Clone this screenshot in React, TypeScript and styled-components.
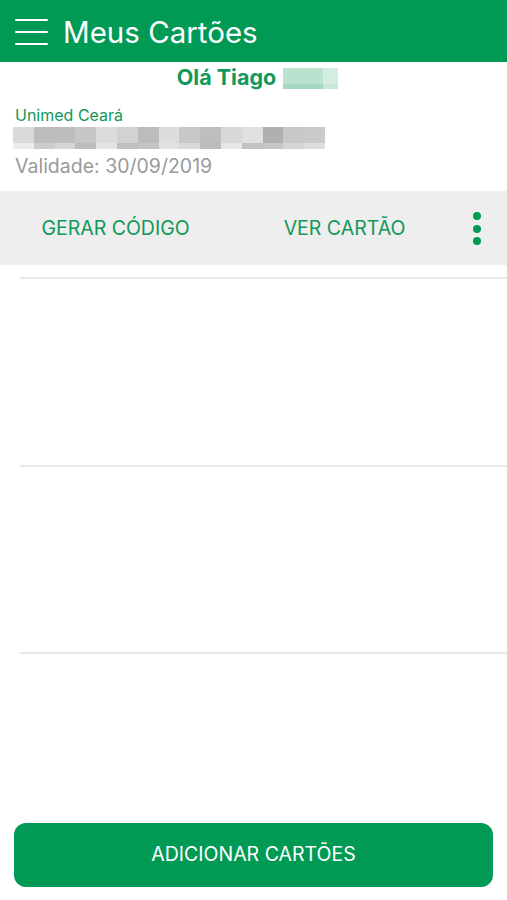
import React from "react";
import styled, { createGlobalStyle } from "styled-components";

const GREEN = "#009a55";
const TEXT_GREEN = "#11985a";

const Global = createGlobalStyle`
  html, body { margin: 0; padding: 0; background: #fff; }
  body { font-family: Inter, "Noto Sans", sans-serif; -webkit-font-smoothing: antialiased; }
  * { box-sizing: border-box; }
`;

const Page = styled.div`
  width: 507px;
  height: 900px;
  display: flex;
  flex-direction: column;
  background: #fff;
  overflow: hidden;
`;

const Header = styled.header`
  height: 62px;
  background: ${GREEN};
  display: flex;
  align-items: center;
  padding-left: 15px;
  gap: 15px;
  flex-shrink: 0;
`;

const MenuButton = styled.div`
  width: 33px;
  display: flex;
  flex-direction: column;
  gap: 10px;
  padding-top: 1px;
`;

const MenuLine = styled.span`
  display: block;
  height: 2px;
  background: #fff;
  border-radius: 1px;
`;

const Title = styled.h1`
  margin: 4px 0 0 0;
  color: #fff;
  font-size: 29.5px;
  font-weight: 400;
  line-height: 1;
`;

const Greeting = styled.div`
  display: flex;
  justify-content: center;
  align-items: center;
  gap: 7px;
  height: 32px;
  padding-left: 8px;
  flex-shrink: 0;
`;

const GreetingText = styled.span`
  color: ${TEXT_GREEN};
  font-size: 21.5px;
  font-weight: 700;
  line-height: 1;
`;

const NameBlur = styled.div`
  width: 55px;
  height: 21px;
  display: grid;
  grid-template-columns: 40px 15px;
  grid-template-rows: 16px 5px;
`;

const BlurCell = styled.span<{ $c: string }>`
  background: ${(p) => p.$c};
`;

const CardInfo = styled.div`
  padding: 12px 13px 0 15px;
  display: flex;
  flex-direction: column;
  height: 97px;
  flex-shrink: 0;
`;

const Company = styled.div`
  color: ${TEXT_GREEN};
  font-size: 16px;
  line-height: 18px;
`;

const Mosaic = styled.div`
  margin-left: -2px;
  margin-top: 3px;
  width: 312px;
  display: grid;
  grid-template-columns: repeat(15, 1fr);
  grid-template-rows: 16px 6px;
`;

const Validity = styled.div`
  color: #9a9a9a;
  font-size: 19.5px;
  margin-top: 6px;
  line-height: 22px;
`;

const ActionBar = styled.div`
  height: 74px;
  background: #eeeeee;
  display: flex;
  align-items: center;
  flex-shrink: 0;
`;

const ActionButton = styled.button<{ $w: number }>`
  width: ${(p) => p.$w}px;
  border: 0;
  background: transparent;
  color: ${TEXT_GREEN};
  font-family: inherit;
  font-size: 19.5px;
  padding: 0;
  text-align: center;
`;

const MoreButton = styled.div`
  width: 38px;
  display: flex;
  flex-direction: column;
  align-items: center;
  gap: 4.5px;
  padding-top: 1px;
`;

const Dot = styled.span`
  width: 8px;
  height: 8px;
  border-radius: 50%;
  background: ${GREEN};
`;

const CardList = styled.div`
  flex: 1;
  min-height: 0;
  overflow: hidden;
  display: flex;
  flex-direction: column;
  padding-top: 12px;
`;

const CardSlot = styled.div`
  height: 187.5px;
  margin-left: 20px;
  border-top: 2px solid #e8e8e8;
  flex-shrink: 0;
`;

const Footer = styled.div`
  padding: 0 14px 13px 14px;
  flex-shrink: 0;
`;

const AddButton = styled.button`
  width: 479px;
  height: 64px;
  border: 0;
  border-radius: 12px;
  background: ${GREEN};
  color: #fff;
  font-family: inherit;
  font-size: 19.5px;
  padding: 0 0 2px 0;
`;

const topRow = [
  "#dadada", "#bdbdbd", "#bdbdbd", "#c6c6c6", "#dcdcdc", "#d2d2d2", "#bcbcbc", "#dddddd",
  "#c8c8c8", "#bebebe", "#d8d8d8", "#e0e0e0", "#b0b0b0", "#c8c8c8", "#cacaca",
];
const bottomRow = [
  "#ececec", "#cccccc", "#d6d6d6", "#bdbdbd", "#e4e4e4", "#bfbfbf", "#c4c4c4", "#e2e2e2",
  "#dadada", "#bcbcbc", "#e6e6e6", "#c2c2c2", "#c6c6c6", "#d4d4d4", "#dedede",
];

export default function App() {
  return (
    <Page>
      <Global />
      <Header>
        <MenuButton>
          <MenuLine />
          <MenuLine />
          <MenuLine />
        </MenuButton>
        <Title>Meus Cartões</Title>
      </Header>
      <Greeting>
        <GreetingText>Olá Tiago</GreetingText>
        <NameBlur>
          <BlurCell $c="#b9e2cf" />
          <BlurCell $c="#d3ede1" />
          <BlurCell $c="#a6d8c0" />
          <BlurCell $c="#c8e8da" />
        </NameBlur>
      </Greeting>
      <CardInfo>
        <Company>Unimed Ceará</Company>
        <Mosaic>
          {topRow.map((c, i) => (
            <BlurCell key={"t" + i} $c={c} />
          ))}
          {bottomRow.map((c, i) => (
            <BlurCell key={"b" + i} $c={c} />
          ))}
        </Mosaic>
        <Validity>Validade: 30/09/2019</Validity>
      </CardInfo>
      <ActionBar>
        <ActionButton $w={231}>GERAR CÓDIGO</ActionButton>
        <ActionButton $w={227}>VER CARTÃO</ActionButton>
        <MoreButton>
          <Dot />
          <Dot />
          <Dot />
        </MoreButton>
      </ActionBar>
      <CardList>
        <CardSlot />
        <CardSlot />
        <CardSlot />
      </CardList>
      <Footer>
        <AddButton>ADICIONAR CARTÕES</AddButton>
      </Footer>
    </Page>
  );
}
